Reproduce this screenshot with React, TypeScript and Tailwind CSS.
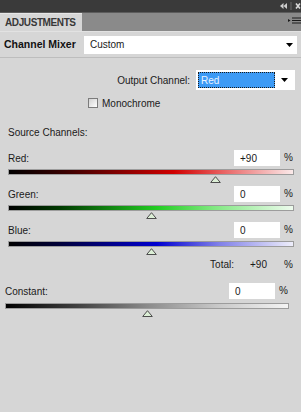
import React from "react";

const DownArrow = () => (
  <svg width="7" height="4" viewBox="0 0 7 4">
    <polygon points="0,0 7,0 3.5,4" fill="#000" />
  </svg>
);

const Thumb = ({ pct }: { pct: number }) => (
  <svg
    width="11"
    height="7"
    viewBox="0 0 11 7"
    className="absolute top-[1px]"
    style={{ left: `calc(${pct}% - 5.5px)` }}
  >
    <polygon points="5.5,0.7 10.3,6.5 0.7,6.5" fill="#dcefd6" stroke="#4d4d4d" strokeWidth="1" />
  </svg>
);

type Ch = { label: string; value: string; num: number; grad: string };

const channels: Ch[] = [
  {
    label: "Red:",
    value: "+90",
    num: 90,
    grad: "bg-[linear-gradient(to_right,#000000,#3a0000_20%,#d00000_58%,#e86060_75%,#fbeaea)]",
  },
  {
    label: "Green:",
    value: "0",
    num: 0,
    grad: "bg-[linear-gradient(to_right,#000000,#003a00_18%,#22cc22_52%,#80e880_72%,#eefbee)]",
  },
  {
    label: "Blue:",
    value: "0",
    num: 0,
    grad: "bg-[linear-gradient(to_right,#000000,#00003a_18%,#0000d0_52%,#8080e8_74%,#eeeefb)]",
  },
];

const pctOf = (v: number) => ((v + 200) / 400) * 100;

function ChannelBlock({ ch }: { ch: Ch }) {
  return (
    <div className="flex flex-col">
      <div className="flex h-[16px] items-center">
        <div className="flex-1">{ch.label}</div>
        <div className="flex h-[16px] w-[46px] items-center bg-white pl-[6px]">{ch.value}</div>
        <div className="ml-[4px] w-[10px] -translate-y-[1px] text-[10px]">%</div>
      </div>
      <div className={`mt-[3px] h-[6px] border border-[#9c9c9c] ${ch.grad}`} />
      <div className="relative h-[11px]">
        <Thumb pct={pctOf(ch.num)} />
      </div>
    </div>
  );
}

export default function App() {
  return (
    <div className="flex h-[412px] w-[301px] flex-col overflow-hidden bg-[#d6d6d6] font-['Liberation_Sans',Arial,sans-serif] text-[10px] text-[#1a1a1a]">
      {/* title bar */}
      <div className="flex h-[13px] items-center justify-end border-b border-[#5c5c5c] bg-[#3a3a3a]">
        <svg width="21" height="8" viewBox="0 0 21 8" className="mr-[0px]">
          <polygon points="0,4 3.5,1 3.5,7" fill="#cfcfcf" />
          <polygon points="3.5,4 7,1 7,7" fill="#cfcfcf" />
          <rect x="10.5" y="0" width="1" height="8" fill="#6a6a6a" />
          <path d="M16,1.5 L20,6.5 M20,1.5 L16,6.5" stroke="#d8d8d8" strokeWidth="1.6" />
        </svg>
      </div>
      {/* tab row */}
      <div className="flex h-[18px] items-end justify-between bg-[#8a8a8a]">
        <div className="flex h-[18px] w-[82px] items-center border-t border-[#e6e6e6] bg-[#d6d6d6] pl-[5px] text-[10px] font-bold tracking-[-0.4px] text-[#383838]">
          ADJUSTMENTS
        </div>
        <svg width="13" height="8" viewBox="0 0 13 8" className="mb-[6px]">
          <polygon points="0,2 2.5,3.5 0,5" fill="#1a1a1a" />
          <rect x="4" y="0.5" width="9" height="1" fill="#1a1a1a" />
          <rect x="4" y="3" width="9" height="1" fill="#1a1a1a" />
          <rect x="4" y="5.5" width="9" height="1" fill="#1a1a1a" />
        </svg>
      </div>
      {/* channel mixer row */}
      <div className="flex h-[26px] items-center border-t border-[#e2e2e2]">
        <div className="w-[84px] pl-[4px] text-[10.5px] font-bold text-[#111]">Channel Mixer</div>
        <div className="mr-[4px] flex h-[18px] flex-1 items-center justify-between bg-white pl-[6px] pr-[4px]">
          <span>Custom</span>
          <DownArrow />
        </div>
      </div>
      <div className="h-px bg-[#bdbdbd]" />

      {/* output channel */}
      <div className="mt-[12px] flex h-[20px] items-center justify-end pr-[6px]">
        <span className="mr-[6px]">Output Channel:</span>
        <div className="flex h-[20px] w-[99px] items-center bg-white pl-[2px] pr-[7px]">
          <div className="flex h-[16px] w-[77px] items-center border border-dotted border-[#1a1a1a] bg-[#3c9af5] pl-[2px] text-[#eaf4ff]">
            Red
          </div>
          <div className="ml-auto">
            <DownArrow />
          </div>
        </div>
      </div>

      {/* monochrome */}
      <div className="mt-[8px] flex h-[10px] items-center pl-[88px]">
        <div className="h-[10px] w-[10px] border border-[#7c7c7c] bg-[linear-gradient(135deg,#d2d2d2,#ffffff)]" />
        <span className="ml-[4px]">Monochrome</span>
      </div>

      {/* source channels */}
      <div className="mt-[18px] flex h-[12px] items-center pl-[8px]">Source Channels:</div>

      <div className="mt-[12px] flex flex-col pl-[8px] pr-[7px]">
        {channels.map((ch) => (
          <ChannelBlock key={ch.label} ch={ch} />
        ))}
        <div className="flex h-[12px] items-center">
          <div className="flex-1 text-right">Total:</div>
          <div className="w-[46px] pl-[16px]">+90</div>
          <div className="ml-[4px] w-[10px]">%</div>
        </div>
      </div>

      {/* constant */}
      <div className="mt-[13px] flex flex-col pl-[5px] pr-[12px]">
        <div className="flex h-[16px] items-center">
          <div className="flex-1 pl-[0px]">Constant:</div>
          <div className="flex h-[16px] w-[46px] items-center bg-white pl-[6px]">0</div>
          <div className="ml-[4px] w-[10px] -translate-y-[1px]">%</div>
        </div>
        <div className="mt-[4px] h-[6px] border border-[#9c9c9c] bg-[linear-gradient(to_right,#000000,#404040_25%,#8a8a8a_50%,#c8c8c8_75%,#f4f4f4)]" />
        <div className="relative h-[11px]">
          <Thumb pct={50} />
        </div>
      </div>
    </div>
  );
}
